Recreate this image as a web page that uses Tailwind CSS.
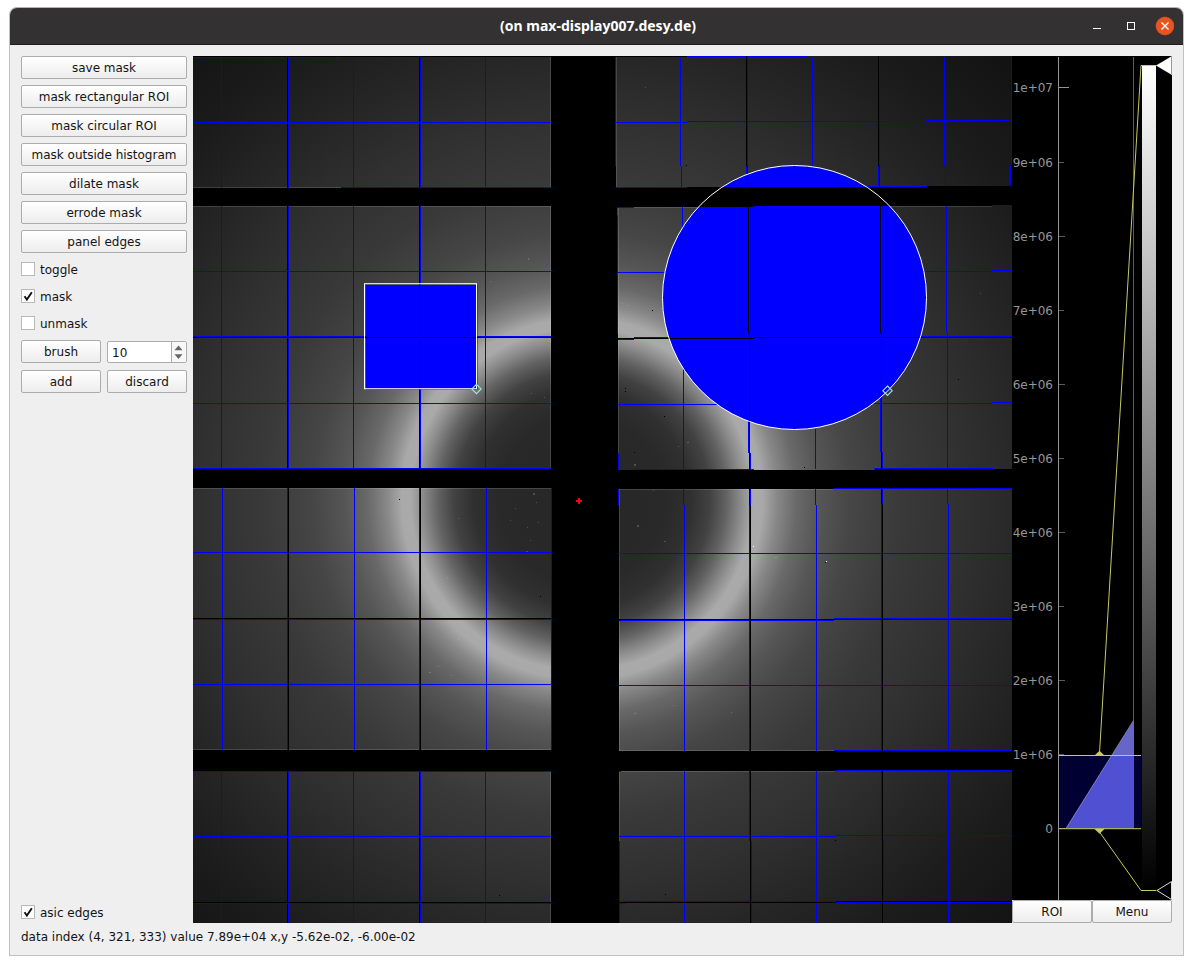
<!DOCTYPE html>
<html lang="en">
<head>
<meta charset="utf-8">
<title>(on max-display007.desy.de)</title>
<script src="https://cdn.jsdelivr.net/npm/@tailwindcss/browser@4"></script>
</head>
<body class="h-[965px] overflow-hidden bg-white pt-[7px] pl-[9px] font-['DejaVu_Sans',sans-serif] text-[12px] leading-[14px] text-[#141414]">
<div class="flex h-[949px] w-[1175px] flex-col overflow-hidden rounded-t-[8px] border border-t-[#b4b2b2] border-r-[#c0c0c0] border-b-[#c0c0c0] border-l-[#c0c0c0] bg-[#efefef]">
  <header class="grid h-[37px] shrink-0 grid-cols-[1fr_auto_1fr] items-center border-b border-[#1f1d1e] bg-[#333132]">
    <span></span>
    <h1 class="pl-[3px] font-['Noto_Sans',sans-serif] text-[14px] font-bold leading-5 text-white"><svg class="block" width="196" height="20"><text x="0" y="15" textLength="196" fill="#fff">(on max-display007.desy.de)</text></svg></h1>
    <div class="flex items-center justify-end pr-[9px]">
      <svg width="84" height="20" viewBox="0 0 84 20" fill="none" stroke="#fff">
        <path d="M3 12.500h8" shape-rendering="crispEdges"/>
        <rect x="37.500" y="6.500" width="7" height="7" shape-rendering="crispEdges"/>
        <circle cx="75" cy="10" r="9" fill="#e95420" stroke="#e95420" stroke-width=".6"/>
        <path d="M71.500 6.500l7 7M78.500 6.500l-7 7" stroke-width="1.400"/>
      </svg>
    </div>
  </header>
  <main class="flex h-[878px] shrink-0 pt-[11px] pl-[11px]">
    <aside class="flex w-[166px] flex-col">
      <div class="flex flex-col gap-[6px]">
        <button class="h-[23px] rounded-[2px] border border-[#acacac] bg-linear-to-b from-white to-[#ededed]">save mask</button>
        <button class="h-[23px] rounded-[2px] border border-[#acacac] bg-linear-to-b from-white to-[#ededed]">mask rectangular ROI</button>
        <button class="h-[23px] rounded-[2px] border border-[#acacac] bg-linear-to-b from-white to-[#ededed]">mask circular ROI</button>
        <button class="h-[23px] rounded-[2px] border border-[#acacac] bg-linear-to-b from-white to-[#ededed]">mask outside histogram</button>
        <button class="h-[23px] rounded-[2px] border border-[#acacac] bg-linear-to-b from-white to-[#ededed]">dilate mask</button>
        <button class="h-[23px] rounded-[2px] border border-[#acacac] bg-linear-to-b from-white to-[#ededed]">errode mask</button>
        <button class="h-[23px] rounded-[2px] border border-[#acacac] bg-linear-to-b from-white to-[#ededed]">panel edges</button>
      </div>
      <div class="mt-[9px] flex flex-col gap-[13px]">
        <label class="flex h-[14px] items-center gap-[5px]"><span class="size-[14px] border border-[#b9b9b9] bg-white"></span><span class="pt-[2px]">toggle</span></label>
        <label class="flex h-[14px] items-center gap-[5px]"><span class="size-[14px] border border-[#b9b9b9] bg-white"><svg width="12" height="12" viewBox="0 0 12 12" fill="none" stroke="#111" stroke-width="1.900"><path d="M2.500 6.200L4.900 9.600 9.800 2.300"/></svg></span><span class="pt-[2px]">mask</span></label>
        <label class="flex h-[14px] items-center gap-[5px]"><span class="size-[14px] border border-[#b9b9b9] bg-white"></span><span class="pt-[2px]">unmask</span></label>
      </div>
      <div class="mt-[10px] grid grid-cols-2 gap-x-[6px] gap-y-[7px]">
        <button class="h-[23px] rounded-[2px] border border-[#acacac] bg-linear-to-b from-white to-[#ededed]">brush</button>
        <div class="mt-px flex h-[22px] rounded-[2px] border border-[#acacac] bg-white">
          <span class="grow pt-[4px] pl-[4px]">10</span>
          <svg class="border-l border-[#acacac] bg-[#f7f7f7]" width="15" height="20" viewBox="0 0 14 20" fill="#666"><path d="M2.500 8.200l4-4.700 4 4.700zM2.500 12.300h8l-4 4.700z"/></svg>
        </div>
        <button class="h-[23px] rounded-[2px] border border-[#acacac] bg-linear-to-b from-white to-[#ededed]">add</button>
        <button class="h-[23px] rounded-[2px] border border-[#acacac] bg-linear-to-b from-white to-[#ededed]">discard</button>
      </div>
      <label class="mt-auto mb-[4px] flex h-[14px] items-center gap-[5px]"><span class="size-[14px] border border-[#b9b9b9] bg-white"><svg width="12" height="12" viewBox="0 0 12 12" fill="none" stroke="#111" stroke-width="1.900"><path d="M2.500 6.200L4.900 9.600 9.800 2.300"/></svg></span><span class="pt-[2px]">asic edges</span></label>
    </aside>

    <svg class="ml-[6px] block shrink-0 bg-black" width="819" height="867" viewBox="193 56 819 867">
      <defs>
        <radialGradient id="ring" gradientUnits="userSpaceOnUse" cx="582" cy="499" r="640">
          <stop offset="0" stop-color="#272727"/>
          <stop offset=".13" stop-color="#292929"/>
          <stop offset=".17" stop-color="#303030"/>
          <stop offset=".2" stop-color="#424242"/>
          <stop offset=".225" stop-color="#626262"/>
          <stop offset=".25" stop-color="#8e8e8e"/>
          <stop offset=".268" stop-color="#aaaaaa"/>
          <stop offset=".282" stop-color="#a9a9a9"/>
          <stop offset=".305" stop-color="#888888"/>
          <stop offset=".335" stop-color="#696969"/>
          <stop offset=".37" stop-color="#565656"/>
          <stop offset=".42" stop-color="#464646"/>
          <stop offset=".5" stop-color="#393939"/>
          <stop offset=".6" stop-color="#303030"/>
          <stop offset=".7" stop-color="#262626"/>
          <stop offset=".82" stop-color="#1b1b1b"/>
          <stop offset="1" stop-color="#101010"/>
        </radialGradient>
        <clipPath id="panels">
          <path d="M193 57h358v131h-358zM193 206h358v263h-358zM193 488h358v262h-358zM193 771h358v152h-358zM616 57h71v-1h324v110h-1v20h-83v1h-240v1h-71zM617 207h136v-1h239v-1h20v264h-137v1h-257v-136h-1zM618 489h215v-1h179v263h-393v-246h-1zM619 771h216v-1h177v153h-393z"/>
        </clipPath>
      </defs>
      <path clip-path="url(#panels)" d="M193 56h819v867h-819z" fill="url(#ring)"/>
      <g clip-path="url(#panels)">
        <!-- brighter outermost pixels of each panel -->
        <path d="M193 187.500h358M550.500 57v131M193 206.500h358M550.500 206v263M193 488.500h358M193 749.500h358M550.500 771v152M616.500 57v131M617 207.500h136M753 206.500h239M618.500 207v262M619 489.500h214M619.500 489v262M619 750.500h215M619 771.500h216M619.500 771v152" fill="none" stroke="#fff" stroke-opacity=".14"/>
        <g fill="#fff" fill-opacity=".3" shape-rendering="crispEdges">
          <path d="M533 493h2v2h-2zM536 502h1v1h-1zM538 522h1v1h-1zM515 508h1v1h-1zM527 527h1v1h-1zM530 540h1v1h-1zM526 551h2v1h-2zM510 520h1v1h-1zM458 518h1v1h-1zM447 577h1v1h-1zM438 666h1v1h-1zM429 672h2v1h-2zM458 639h1v1h-1zM451 675h1v1h-1zM637 525h2v2h-2zM664 541h2v1h-2zM653 490h1v1h-1zM775 557h2v1h-2zM730 568h1v1h-1zM717 609h1v1h-1zM634 713h2v1h-2zM731 712h1v1h-1zM673 705h1v1h-1zM980 293h1v1h-1zM531 393h1v1h-1zM544 397h1v1h-1zM485 429h1v1h-1zM528 258h1v2h-1zM490 281h1v1h-1zM622 303h1v1h-1zM628 305h1v1h-1zM645 87h1v1h-1zM687 442h2v1h-2zM678 446h1v1h-1zM634 464h2v2h-2z" opacity=".6"/>
        </g>
        <path fill="#000" shape-rendering="crispEdges" d="M399 499h1v1h-1zM540 596h1v1h-1zM652 310h1v1h-1zM625 388h1v1h-1zM625 391h1v1h-1zM664 416h1v1h-1zM634 452h1v1h-1zM804 467h1v1h-1zM958 379h1v1h-1zM825 562h1v1h-1zM686 165h1v1h-1zM835 840h1v1h-1zM665 894h1v1h-1zM499 895h1v1h-1z"/>
        <path fill="#fff" d="M826 561h1v1h-1zM753 546h1v1h-1z"/>
        <rect x="366" y="285" width="111.500" height="104.500" fill="#00f"/>
        <circle cx="794.500" cy="297.500" r="132" fill="#00f"/>
      </g>
      <!-- ASIC borders masked in blue -->
      <g transform="translate(.4 .4)" fill="none" stroke="#00f" shape-rendering="crispEdges">
        <path d="M221 57v131M288 57v131M353 57v131M420 57v131M485 57v131M193 57h148M193 122h358M341 187h210"/>
        <path d="M221 206v263M288 206v263M353 206v263M420 206v263M485 206v263M193 271h358M193 336h358M193 403h358M193 468h358"/>
        <path d="M222 488v262M287 488v262M354 488v262M419 488v262M486 488v262M551 488v262M193 552h358M193 619h358M193 684h358"/>
        <path d="M221 771v152M288 771v152M353 771v152M420 771v152M485 771v152M193 771h358M193 836h358M193 903h358"/>
        <path d="M615 57v109M680 57v109M681 166v21M747 57v109M746 166v21M812 57v109M879 57v109M878 166v21M944 57v109M945 166v20M1011 56v109M1010 165v21M687 56h120M616 122h71M687 121h239M926 120h84M616 187h71M744 186h183"/>
        <path d="M617 215v119M617 207h17M682 207v32M683 334v135M748 421v32M750 453v17M880 396v56M882 452v17M815 429v40M946 206v127M947 333v136M1011 205v8M618 272h47M924 271h68M992 270h20M618 339h16M634 337h36M920 336h72M992 336h20M618 404h99M873 403h119M992 402h20M635 469h119M874 468h119M618 453v17"/>
        <path d="M618 489v16M683 489v16M684 505v246M750 489v16M749 505v246M815 489v16M816 505v246M882 489v15M881 504v247M947 489v15M948 504v247M833 488h179M618 553h394M619 620h215M834 618h178M619 685h393M834 750h178"/>
        <path d="M684 771v152M749 771v70M751 841v82M816 771v152M881 771v69M883 840v83M948 771v152M949 840v83M619 841v82M619 771h2M835 770h177M619 836h216M835 835h177M622 901h214M836 902h176M619 903h6"/>
      </g>
      <!-- gaps between ASICs -->
      <g transform="translate(.4 .4)" fill="none" stroke="#000" shape-rendering="crispEdges">
        <path d="M193 56h494M287 57v131M419 57v131M287 206v263M419 206v263M193 337h358M288 488v262M420 488v262M193 618h358M287 771v152M419 771v152M193 902h358"/>
        <path d="M746 56v110M747 166v21M878 56v110M879 166v21M748 206v127M749 333v172M750 505v246M880 206v127M881 333v171M882 504v247M618 338h136M754 337h258M619 619h393M750 771v152M882 771v152M619 902h217M836 901h176"/>
      </g>
      <rect x="364.500" y="283.700" width="112" height="105" fill="none" stroke="#fff"/>
      <circle cx="794.500" cy="297.500" r="132" fill="none" stroke="#fff"/>
      <path d="M476.500 384.300l4.700 4.700-4.700 4.700-4.700-4.700zM887.500 386l4.700 4.700-4.700 4.700-4.700-4.700z" fill="none" stroke="#96e6e6" stroke-width="1.100"/>
      <path d="M576 500h2v-2h2v2h2v2h-2v2h-2v-2h-2z" fill="#f00" shape-rendering="crispEdges"/>
    </svg>

    <section class="flex w-[160px] shrink-0 flex-col">
      <svg class="block bg-black" width="160" height="844" viewBox="1012 56 160 844">
        <defs>
          <linearGradient id="levels" x1="0" y1="0" x2="0" y2="1"><stop stop-color="#fff"/><stop offset="1" stop-color="#000"/></linearGradient>
        </defs>
        <path d="M1133.500 57v664" stroke="#5c5c5c"/>
        <path d="M1066 828.500L1134 720v108.500z" fill="#6666c8"/>
        <path d="M1059 755h82v73.500h-82z" fill="#000032"/>
        <path d="M1066 828.500L1112 755h22v73.500z" fill="#5050d2"/>
        <path d="M1066 828.500L1133.500 720.500" stroke="#a0a0c8" stroke-width=".7"/>
        <path d="M1058.500 57v843M1058.500 87.500h10.500" stroke="#969696" fill="none"/>
        <path d="M1059 162.500h5M1059 236.500h6M1059 310.500h5M1059 384.500h6M1059 458.500h5M1059 532.500h6M1059 606.500h5M1059 680.500h6M1059 754.500h5M1059 828.500h6" stroke="#5a5a5a"/>
        <g fill="#969696" text-anchor="end">
          <text x="1053" y="92">1e+07</text><text x="1053" y="167">9e+06</text><text x="1053" y="241">8e+06</text><text x="1053" y="315">7e+06</text><text x="1053" y="389">6e+06</text><text x="1053" y="463">5e+06</text><text x="1053" y="537">4e+06</text><text x="1053" y="611">3e+06</text><text x="1053" y="685">2e+06</text><text x="1053" y="759">1e+06</text><text x="1053" y="833">0</text>
        </g>
        <path d="M1142 66h14v824h-14z" fill="url(#levels)"/>
        <g stroke="#c8c864" fill="none">
          <path d="M1059 755.500h82M1059 828.700h82M1099.500 753L1141 65.500h15.500M1099.500 832L1141 890.500h15.500"/>
          <path d="M1094.500 755.500l5-4.700 5 4.700zM1094.500 829l5 4.700 5-4.700z" fill="#c8c864" stroke="none"/>
        </g>
        <path d="M1156 65.500l16-9.500v19z" fill="#fff"/>
        <path d="M1157 890.500l14.500-9v18z" fill="#000" stroke="#ddd"/>
        <path d="M1171.500 56v18" stroke="#999"/>
      </svg>
      <div class="grid h-[23px] grid-cols-2">
        <button class="rounded-[2px] border border-[#acacac] bg-linear-to-b from-white to-[#ededed]">ROI</button>
        <button class="rounded-[2px] border border-[#acacac] bg-linear-to-b from-white to-[#ededed]">Menu</button>
      </div>
    </section>
  </main>
  <footer class="pt-[7px] pl-[11px]">data index (4, 321, 333) value 7.89e+04 x,y -5.62e-02, -6.00e-02</footer>
</div>
</body>
</html>
